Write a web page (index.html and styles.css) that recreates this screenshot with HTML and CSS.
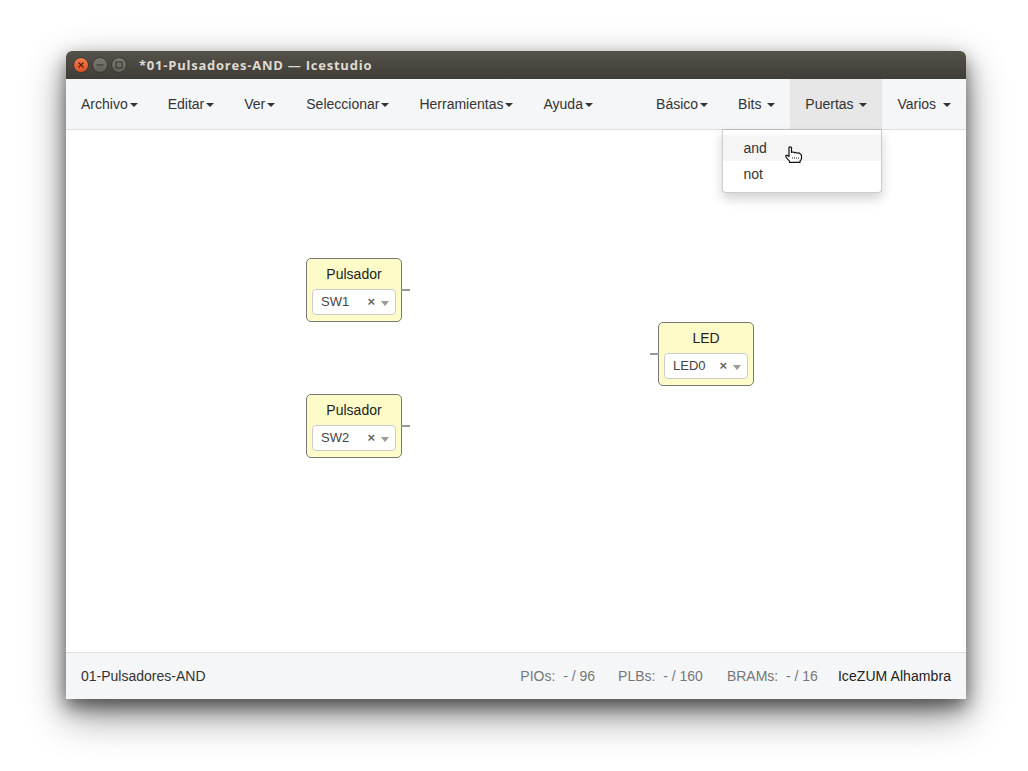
FILE: index.html
```html
<!DOCTYPE html>
<html lang="en">
<head>
	<meta charset="UTF-8">
	<title>Icestudio</title>
	<link rel="stylesheet" href="styles.css">
</head>
<body>
	<div class="window">
		<div class="titlebar">
			<span class="btn btn-close"><svg width="8" height="8" viewBox="0 0 8 8"><path d="M1.500 1.500l5 5M6.500 1.500l-5 5" stroke="#5c1f0c" stroke-width="1.300"/></svg></span>
			<span class="btn"><svg width="8" height="8" viewBox="0 0 8 8"><path d="M0.500 4h7" stroke="#3b3a35" stroke-width="1.200"/></svg></span>
			<span class="btn"><svg width="8" height="8" viewBox="0 0 8 8"><rect x="1" y="1" width="6" height="6" fill="none" stroke="#3b3a35" stroke-width="1.100"/></svg></span>
			<span class="title">*01-Pulsadores-AND — Icestudio</span>
		</div>
		<div class="navbar">
			<ul class="menu">
				<li>Archivo<i class="caret"></i></li>
				<li>Editar<i class="caret"></i></li>
				<li class="nudge">Ver<i class="caret"></i></li>
				<li>Seleccionar<i class="caret"></i></li>
				<li>Herramientas<i class="caret"></i></li>
				<li>Ayuda<i class="caret"></i></li>
			</ul>
			<ul class="menu">
				<li>Básico<i class="caret"></i></li>
				<li>Bits <i class="caret"></i></li>
				<li class="open">Puertas <i class="caret"></i>
					<ul class="dropdown">
						<li class="hover">and</li>
						<li>not</li>
					</ul>
				</li>
				<li class="nudge-last">Varios <i class="caret"></i></li>
			</ul>
		</div>
		<div class="canvas">
			<div class="block block-sw1">
				<div class="block-name">Pulsador</div>
				<div class="pin-select"><span class="pin-label">SW1</span><span class="clear">×</span><i class="arrow"></i></div>
				<i class="wire wire-out"></i>
			</div>
			<div class="block block-sw2">
				<div class="block-name">Pulsador</div>
				<div class="pin-select"><span class="pin-label">SW2</span><span class="clear">×</span><i class="arrow"></i></div>
				<i class="wire wire-out"></i>
			</div>
			<div class="block block-led">
				<div class="block-name">LED</div>
				<div class="pin-select"><span class="pin-label">LED0</span><span class="clear">×</span><i class="arrow"></i></div>
				<i class="wire wire-in"></i>
			</div>
			<svg class="cursor" width="18" height="17" viewBox="0 0 18 17"><path d="M4 1.800c0-1.300 2.500-1.300 2.500 0v4.700c1-.8 2.400-.6 2.800.3 1-.6 2.400-.4 2.800.5 1-.5 2.300-.3 2.900.4.800.4 1.500 1 1.500 2v2.300c0 1.500-.6 2.500-1.500 3.100v1.300H4.500v-1.300C3.300 14 2 12.600 1 11c-.7-1.100.5-2.300 1.500-1.600l1.500 1.100z" fill="#fff" stroke="#111" stroke-width="1.200" stroke-linejoin="round"/><path d="M7.500 11v2M9.500 11v2M11.500 11v2M13.500 11v2" stroke="#888" stroke-width="1"/></svg>
		</div>
		<div class="footer">
			<span class="filename">01-Pulsadores-AND</span>
			<div class="stats">
				<span class="stat stat-first">PIOs:&nbsp; - / 96</span>
				<span class="stat">PLBs:&nbsp; - / 160</span>
				<span class="stat">BRAMs:&nbsp; - / 16</span>
				<span class="board">IceZUM Alhambra</span>
			</div>
		</div>
	</div>
</body>
</html>
```

FILE: styles.css
```css
*{
	margin: 0px;
	padding: 0px;
	list-style: none;
	box-sizing: border-box;
}
body{
	background-color: #fff;
	font-family: "Liberation Sans", Arial, sans-serif;
	font-size: 14px;
	color: #333;
	height: 771px;
	overflow: hidden;
	padding: 51px 62px 0 66px;
}
.window{
	width: 900px;
	height: 648px;
	display: flex;
	flex-direction: column;
	border-radius: 6px 6px 0 0;
	box-shadow: 0 16px 40px rgba(0,0,0,.45), 0 8px 18px rgba(0,0,0,.5);
	background-color: #fff;
}
.titlebar{
	height: 28px;
	flex: none;
	display: flex;
	align-items: center;
	padding-left: 7px;
	border-radius: 6px 6px 0 0;
	background: linear-gradient(#55524a, #3f3d37);
}
.btn{
	width: 16px;
	height: 16px;
	margin-right: 3px;
	border-radius: 50%;
	display: flex;
	align-items: center;
	justify-content: center;
	background: linear-gradient(#7b7970, #625f58);
	border: 1px solid #3b3a35;
}
.btn-close{
	background: linear-gradient(#f47c4e, #e0501f);
}
.title{
	margin-left: 9px;
	font-family: "Open Sans", sans-serif;
	font-weight: 700;
	font-size: 13px;
	letter-spacing: .77px;
	color: #dfdbd2;
}
.navbar{
	height: 51px;
	flex: none;
	display: flex;
	justify-content: space-between;
	background-color: #f5f6f8;
	border-bottom: 1px solid #dcdfe1;
}
.menu{
	display: flex;
}
.menu > li{
	position: relative;
	height: 50px;
	padding: 15px;
	line-height: 20px;
	white-space: nowrap;
}
.menu > li.nudge{
	padding-right: 16px;
}
.menu > li.open{
	background-color: #e7e7e7;
}
.caret{
	display: inline-block;
	margin-left: 2px;
	vertical-align: middle;
	border-top: 4px solid #333;
	border-left: 4px solid transparent;
	border-right: 4px solid transparent;
}
.nudge-last .caret{
	margin-left: 3px;
}
.dropdown{
	position: absolute;
	z-index: 5;
	top: 50px;
	right: 0;
	width: 160px;
	padding: 5px 0;
	background-color: #fff;
	border: 1px solid #ccc;
	border-top-color: #bbb;
	border-radius: 0 0 4px 4px;
	box-shadow: 0 6px 12px rgba(0,0,0,.175);
}
.dropdown li{
	height: 26px;
	line-height: 26px;
	padding-left: 20px;
}
.dropdown li.hover{
	background-color: #f5f5f5;
}
.canvas{
	position: relative;
	flex: 1;
}
.block{
	position: absolute;
	width: 96px;
	height: 64px;
	padding: 0 5px;
	background-color: #fdfcc9;
	border: 1px solid #777;
	border-radius: 5px;
}
.block-sw1{
	left: 240px;
	top: 128px;
}
.block-sw2{
	left: 240px;
	top: 264px;
}
.block-led{
	left: 592px;
	top: 192px;
}
.block-name{
	height: 30px;
	line-height: 31px;
	text-align: center;
	color: #222;
}
.pin-select{
	display: flex;
	align-items: center;
	height: 26px;
	padding: 0 6px 2px 8px;
	background-color: #fff;
	border: 1px solid #ccc;
	border-radius: 4px;
	font-size: 13px;
	color: #444;
}
.pin-label{
	flex: 1;
}
.clear{
	font-weight: 700;
	color: #666;
	font-size: 13px;
	margin-right: 6px;
}
.arrow{
	margin-top: 5px;
	border-top: 5px solid #999;
	border-left: 4px solid transparent;
	border-right: 4px solid transparent;
}
.wire{
	position: absolute;
	top: 30px;
	width: 9px;
	height: 2px;
	background-color: #999;
}
.wire-out{
	left: 94px;
}
.wire-in{
	left: -9px;
}
.cursor{
	position: absolute;
	z-index: 6;
	left: 719px;
	top: 16px;
}
.footer{
	height: 47px;
	flex: none;
	display: flex;
	justify-content: space-between;
	align-items: center;
	padding: 0 15px;
	background-color: #f5f6f8;
	border-top: 1px solid #dcdfe1;
}
.stats{
	display: flex;
	gap: 24px;
}
.stat{
	color: #777;
}
.stat-first{
	margin-right: -1px;
}
.board{
	color: #222;
	margin-left: -4px;
	letter-spacing: .07px;
}
```
